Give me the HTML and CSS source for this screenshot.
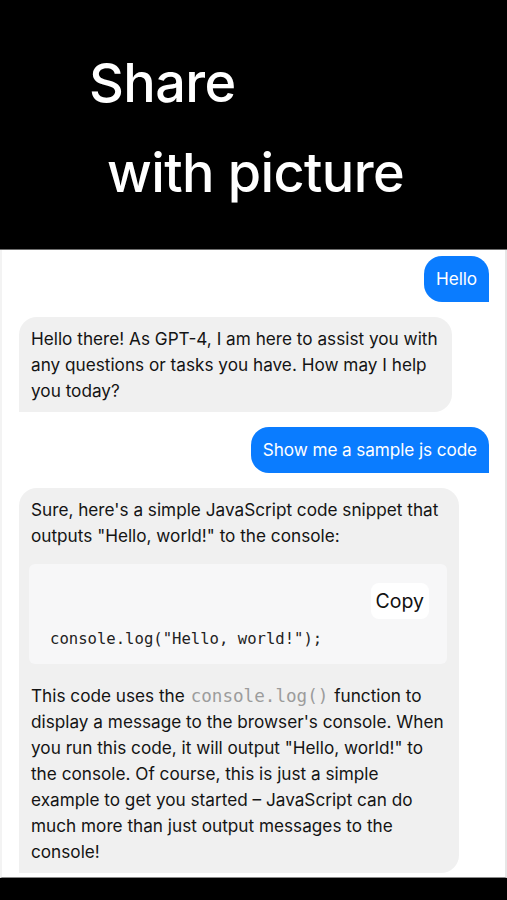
FILE: index.html
```html
<!DOCTYPE html>
<html lang="en">
<head>
<meta charset="utf-8">
<title>Share with picture</title>
<link rel="stylesheet" href="styles.css">
</head>
<body>
<div class="screen">
  <header class="hero">
    <div class="hero-line hero-line-1">Share</div>
    <div class="hero-line hero-line-2">with picture</div>
  </header>
  <main class="chat">
    <div class="msg user">Hello</div>
    <div class="msg bot bot-1">Hello there! As GPT-4, I am here to assist you with any questions or tasks you have. How may I help you today?</div>
    <div class="msg user">Show me a sample js code</div>
    <div class="msg bot bot-2">
      <p class="para">Sure, here's a simple JavaScript code snippet that outputs "Hello, world!" to the console:</p>
      <div class="code-block">
        <div class="code-head"><button class="copy-btn">Copy</button></div>
        <pre class="code">console.log("Hello, world!");</pre>
      </div>
      <p class="para para-after">This code uses the <code class="inline-code">console.log()</code> function to display a message to the browser's console. When you run this code, it will output "Hello, world!" to the console. Of course, this is just a simple example to get you started – JavaScript can do much more than just output messages to the console!</p>
    </div>
  </main>
  <footer class="bottom-bar"></footer>
</div>
</body>
</html>
```

FILE: styles.css
```css
* { box-sizing: border-box; }
html, body { margin: 0; padding: 0; background: #000; }
body { font-family: Inter, "Liberation Sans", sans-serif; }

.screen {
  width: 507px;
  height: 900px;
  display: flex;
  flex-direction: column;
  background: #000;
}

.hero {
  height: 250px;
  flex: none;
  background: #000;
  border-bottom: 1px solid #6e6e6e;
  padding-top: 38px;
  color: #fff;
}
.hero-line {
  font-size: 54px;
  line-height: 90px;
  font-weight: 500;
  letter-spacing: -0.6px;
  white-space: nowrap;
}
.hero-line-1 { padding-left: 89px; }
.hero-line-2 { padding-left: 107px; }

.chat {
  flex: none;
  height: 628px;
  background: #fff;
  border-left: 2px solid #f3f3f3;
  border-right: 2px solid #e6e6e6;
  border-bottom: 1px solid #8a8a8a;
  padding: 6px 16px 0 17px;
  display: flex;
  flex-direction: column;
  gap: 15px;
  overflow: hidden;
}

.msg {
  font-size: 17.2px;
  line-height: 26px;
  border-radius: 18px;
  padding: 10px 12px;
}
.user {
  align-self: flex-end;
  background: #0a7cff;
  color: #fff;
  border-bottom-right-radius: 0;
  letter-spacing: -0.1px;
}
.bot {
  align-self: flex-start;
  background: #f0f0f0;
  color: #141414;
  border-bottom-left-radius: 0;
  padding: 9px 12px 8px;
}
.bot-1 { max-width: 433px; }
.bot-2 { max-width: 440px; }

.para { margin: 0; }
.para-after { margin-top: 19px; }

.code-block {
  margin: 15px 0 0 -2px;
  background: #f7f7f8;
  border-radius: 6px;
  padding: 19px 18px 14px 21px;
}
.code-head {
  display: flex;
  justify-content: flex-end;
}
.copy-btn {
  font-family: Inter, "Liberation Sans", sans-serif;
  font-size: 19.5px;
  line-height: 36px;
  height: 36px;
  padding: 0 5px;
  border: none;
  border-radius: 8px;
  background: #fff;
  color: #111;
}
.code {
  margin: 9px 0 0;
  font-family: "DejaVu Sans Mono", "Liberation Mono", monospace;
  font-size: 15.6px;
  line-height: 22px;
  color: #222;
}
.inline-code {
  font-family: "DejaVu Sans Mono", "Liberation Mono", monospace;
  font-size: 17.6px;
  line-height: 1;
  padding: 0 1px;
  color: #9c9c9c;
}

.bottom-bar {
  flex: 1;
  background: #000;
}
```
